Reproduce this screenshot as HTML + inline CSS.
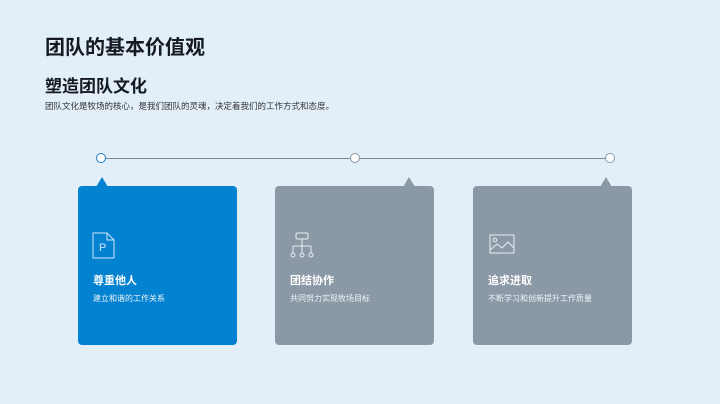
<!DOCTYPE html>
<html><head><meta charset="utf-8"><style>
body{margin:0;width:720px;height:404px;background:#e3eff8;font-family:"Liberation Sans","Noto Sans CJK SC",sans-serif;position:relative;overflow:hidden}
.a{position:absolute;white-space:nowrap}
.card{position:absolute;top:186px;width:159px;height:159px;border-radius:4px}
.tri{position:absolute;top:177px;width:0;height:0;border-left:6px solid transparent;border-right:6px solid transparent;border-bottom:10px solid}
.h{position:absolute;left:15px;top:86px;color:#fff;font-size:11px;font-weight:bold}
.s{position:absolute;left:15px;top:107px;color:#eef3f8;font-size:8px}
.ic{position:absolute;left:14px;top:46px}
</style></head><body>
<div class="a" style="left:45px;top:31px;font-size:20px;font-weight:bold;color:#151a20">团队的基本价值观</div>
<div class="a" style="left:45px;top:72px;font-size:17px;font-weight:bold;color:#151a20">塑造团队文化</div>
<div class="a" style="left:45px;top:100px;font-size:8.5px;color:#333">团队文化是牧场的核心，是我们团队的灵魂，决定着我们的工作方式和态度。</div>
<div class="a" style="left:101px;top:158px;width:509px;height:1px;background:#7d8a99"></div>
<div class="a" style="left:96px;top:153px;width:8px;height:8px;border:1px solid #1a7fc8;border-radius:50%;background:#fff"></div>
<div class="a" style="left:350px;top:153px;width:8px;height:8px;border:1px solid #8b99a6;border-radius:50%;background:#fff"></div>
<div class="a" style="left:605px;top:153px;width:8px;height:8px;border:1px solid #8b99a6;border-radius:50%;background:#fff"></div>
<div class="tri" style="left:96px;border-bottom-color:#0282d0"></div>
<div class="tri" style="left:403px;border-bottom-color:#8b99a6"></div>
<div class="tri" style="left:600px;border-bottom-color:#8b99a6"></div>
<div class="card" style="left:78px;background:#0282d0">
<svg class="ic" width="24" height="28" viewBox="0 0 24 28" fill="none" stroke="#cfe6f7" stroke-width="1"><path d="M1 1H15L22 8V26H1Z M15 1V8H22"/><text x="7" y="19" font-size="11" fill="#cfe6f7" stroke="none" font-family="Liberation Sans">P</text></svg>
<div class="h">尊重他人</div><div class="s">建立和谐的工作关系</div></div>
<div class="card" style="left:275px;background:#8b99a6">
<svg class="ic" width="26" height="28" viewBox="0 0 26 28" fill="none" stroke="#e8edf2" stroke-width="1"><rect x="7" y="1" width="12" height="6" rx="1.5"/><path d="M13 7V14M4 14H22M4 14V21M13 14V21M22 14V21"/><circle cx="4" cy="23" r="2"/><circle cx="13" cy="23" r="2"/><circle cx="22" cy="23" r="2"/></svg>
<div class="h">团结协作</div><div class="s">共同努力实现牧场目标</div></div>
<div class="card" style="left:473px;background:#8b99a6">
<svg class="ic" width="28" height="24" viewBox="0 0 28 24" fill="none" stroke="#e8edf2" stroke-width="1"><rect x="3" y="3" width="24" height="18"/><circle cx="8" cy="8" r="1.8"/><path d="M3 18L10 12L15 16L21 10L27 16"/></svg>
<div class="h">追求进取</div><div class="s">不断学习和创新提升工作质量</div></div>
</body></html>
